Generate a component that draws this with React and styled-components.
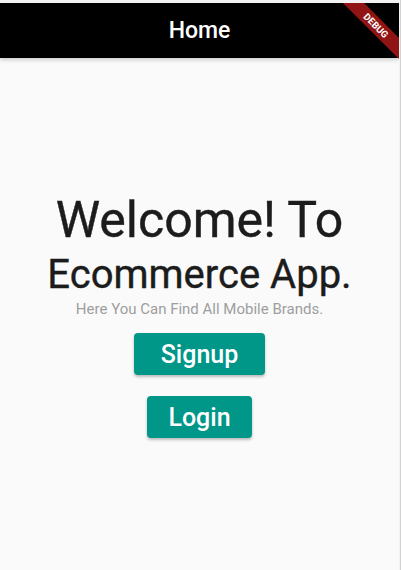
import React from "react";
import styled, { createGlobalStyle } from "styled-components";

const GlobalStyle = createGlobalStyle`
  html, body {
    margin: 0;
    padding: 0;
    background: #f2f2f2;
  }
  body {
    font-family: Roboto, "Liberation Sans", sans-serif;
  }
`;

const Frame = styled.div`
  height: 570px;
  width: 401px;
  box-sizing: border-box;
  padding-top: 3px;
  padding-right: 1px;
  background: #f2f2f2;
  border-right: 1px solid #d2d2d2;
  display: flex;
`;

const Screen = styled.div`
  position: relative;
  overflow: hidden;
  flex: 1;
  display: flex;
  flex-direction: column;
  background: #fafafa;
`;

const AppBar = styled.header`
  height: 55px;
  background: #000;
  color: #fff;
  display: flex;
  align-items: center;
  justify-content: center;
  box-shadow: 0 2px 4px rgba(0, 0, 0, 0.18);
  z-index: 1;
`;

const Title = styled.h1`
  margin: 0;
  font-size: 23px;
  font-weight: 500;
`;

const Body = styled.main`
  flex: 1;
  display: flex;
  flex-direction: column;
  align-items: center;
  justify-content: center;
`;

const Heading = styled.div`
  font-size: ${(p) => p.size}px;
  line-height: ${(p) => p.lh}px;
  color: #1c1c1c;
  font-weight: 400;
  -webkit-text-stroke: 0.4px #1c1c1c;
`;

const Subtitle = styled.p`
  margin: 0 0 15px;
  font-size: 15px;
  line-height: 18px;
  color: #9e9e9e;
`;

const Actions = styled.div`
  display: flex;
  flex-direction: column;
  align-items: center;
  gap: 21px;
`;

const Button = styled.button`
  border: none;
  border-radius: 4px;
  background: #009688;
  color: #fff;
  font-family: inherit;
  font-size: 25px;
  font-weight: 500;
  height: 42px;
  padding: 0 ${(p) => p.pad}px;
  box-shadow: 0 2px 3px rgba(0, 0, 0, 0.25);
`;

const Banner = styled.div`
  position: absolute;
  left: 326px;
  top: 15px;
  width: 100px;
  height: 15px;
  transform: rotate(45deg);
  background: rgba(160, 22, 22, 0.9);
  color: #fff;
  font-size: 9.5px;
  font-weight: 700;
  line-height: 15px;
  text-align: center;
  z-index: 2;
`;

export default function App() {
  return (
    <>
      <GlobalStyle />
      <Frame>
        <Screen>
          <AppBar>
            <Title>Home</Title>
          </AppBar>
          <Body>
            <Heading size={50} lh={60}>Welcome! To</Heading>
            <Heading size={40} lh={50}>Ecommerce App.</Heading>
            <Subtitle>Here You Can Find All Mobile Brands.</Subtitle>
            <Actions>
              <Button pad={27}>Signup</Button>
              <Button pad={21}>Login</Button>
            </Actions>
          </Body>
          <Banner>DEBUG</Banner>
        </Screen>
      </Frame>
    </>
  );
}
